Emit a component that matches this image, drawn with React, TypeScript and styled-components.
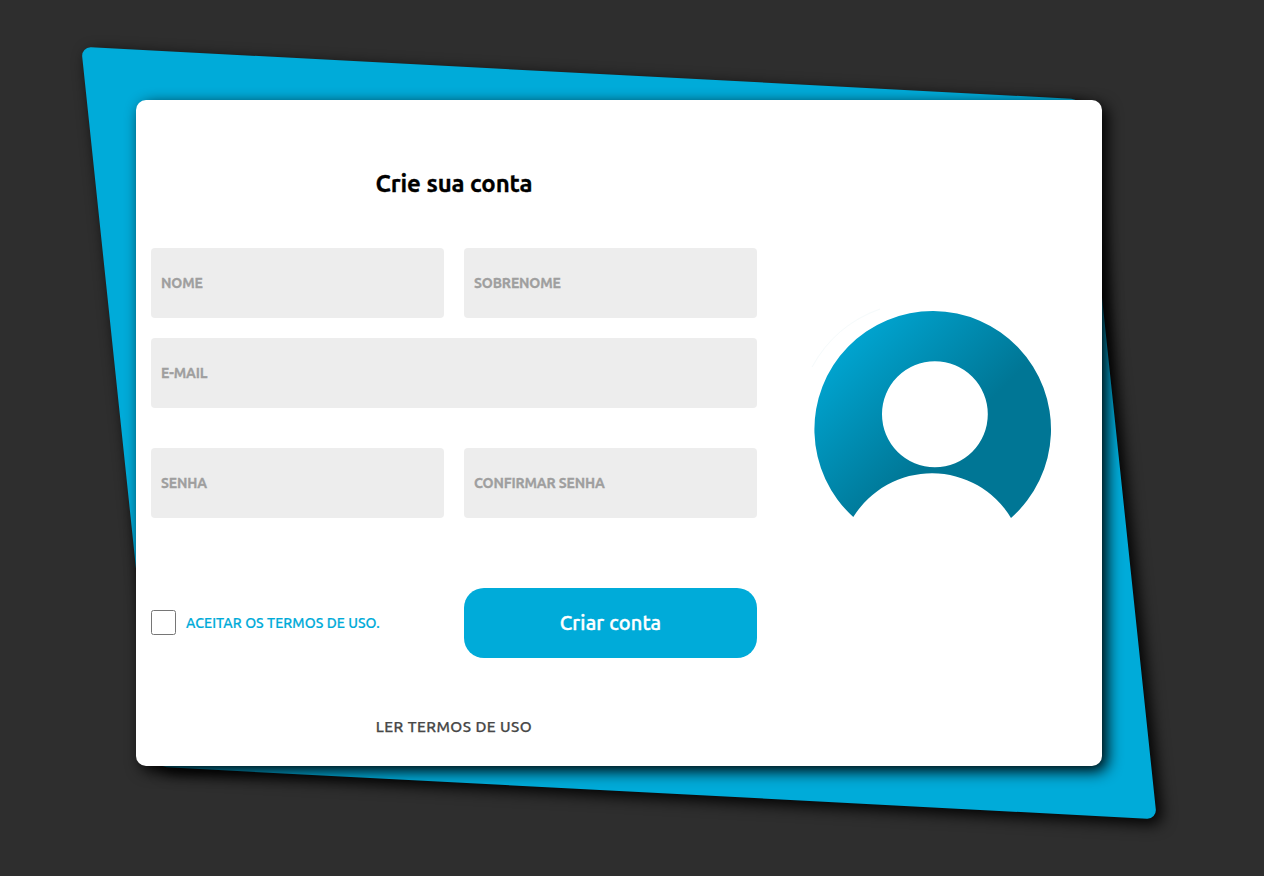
import React from "react";
import styled, { createGlobalStyle } from "styled-components";

const GlobalStyle = createGlobalStyle`
  * { box-sizing: border-box; }
  body {
    margin: 0;
    background: #2e2e2e;
    font-family: Ubuntu, "Noto Sans", sans-serif;
    overflow: hidden;
  }
`;

const Page = styled.main`
  height: 876px;
  padding: 100px 162px 110px 136px;
`;

const Stage = styled.div`
  position: relative;
  width: 966px;
  height: 666px;
`;

const Backdrop = styled.div`
  position: absolute;
  inset: -27px -17px;
  border-radius: 10px;
  background: #00abd9;
  box-shadow: 5px 5px 15px #000;
  transform: skew(6deg, 3deg);
`;

const Card = styled.section`
  position: relative;
  display: flex;
  height: 100%;
  padding: 0 15px;
  border-radius: 10px;
  background: #fff;
  box-shadow: 5px 5px 15px #000;
`;

const Form = styled.form`
  display: flex;
  flex-direction: column;
  width: 606px;
`;

const Title = styled.h1`
  margin: 66px 0 46px;
  height: 36px;
  line-height: 36px;
  font-size: 24px;
  font-weight: 700;
  letter-spacing: -0.1px;
  -webkit-text-stroke: 0.3px;
  text-align: center;
  color: #000;
`;

const Row = styled.div<{ $gap?: number }>`
  display: flex;
  align-items: center;
  gap: 20px;
  height: 70px;
  margin-bottom: ${(p) => p.$gap ?? 0}px;
`;

const Field = styled.input`
  flex: 1;
  min-width: 0;
  height: 70px;
  padding: 0 10px;
  border: 0;
  border-radius: 4px;
  background: #ededed;
  font: 700 14px Ubuntu, "Noto Sans", sans-serif;
  letter-spacing: -0.14px;
  &::placeholder {
    color: #9f9f9f;
    opacity: 1;
    -webkit-text-stroke: 0.3px;
  }
`;

const Terms = styled.label`
  flex: 1;
  display: flex;
  align-items: center;
  gap: 10px;
  height: 25px;
  margin-bottom: 1px;
  font-size: 14px;
  font-weight: 500;
  letter-spacing: 0.06px;
  -webkit-text-stroke: 0.2px;
  color: #00abd9;
  white-space: nowrap;
`;

const Check = styled.input`
  appearance: none;
  width: 25px;
  height: 25px;
  margin: 0;
  border: 1px solid #767676;
  border-radius: 2.5px;
  background: #fff;
`;

const Submit = styled.button`
  flex: 1;
  height: 70px;
  padding: 0 0 1px;
  border: 0;
  border-radius: 20px;
  background: #00abd9;
  color: #fff;
  font: 500 20px Ubuntu, "Noto Sans", sans-serif;
  letter-spacing: 0.16px;
  -webkit-text-stroke: 0.4px;
`;

const ReadTerms = styled.a`
  align-self: center;
  margin-top: 57px;
  line-height: 24px;
  font-size: 15.3px;
  font-weight: 500;
  letter-spacing: 0.43px;
  -webkit-text-stroke: 0.25px;
  color: #484848;
  white-space: nowrap;
`;

const Picture = styled.div`
  flex: 1;
  padding: 200px 0 0 43px;
`;

const Avatar = () => (
  <svg width="260" height="230" viewBox="800 300 260 230" aria-hidden="true" display="block">
    <defs>
      <linearGradient id="shade" gradientUnits="userSpaceOnUse" x1="843" y1="344" x2="945" y2="446">
        <stop offset="0" stopColor="#00a5d1" />
        <stop offset="1" stopColor="#007695" />
      </linearGradient>
    </defs>
    <path d="M812 367Q835 325 880 309" fill="none" stroke="#f5fafb" />
    <path
      fill="url(#shade)"
      fillRule="evenodd"
      d="M853.3 517A118.3 118.3 0 1 1 1011 518A92.4 92.4 0 0 0 853.3 517ZM882 414.2a52.9 52.9 0 1 0 105.8 0a52.9 52.9 0 1 0-105.8 0Z"
    />
  </svg>
);

export default function App() {
  return (
    <>
      <GlobalStyle />
      <Page>
        <Stage>
          <Backdrop />
          <Card>
            <Form>
              <Title>Crie sua conta</Title>
              <Row $gap={20}>
                <Field placeholder="NOME" />
                <Field placeholder="SOBRENOME" />
              </Row>
              <Row $gap={40}>
                <Field placeholder="E-MAIL" />
              </Row>
              <Row $gap={70}>
                <Field type="password" placeholder="SENHA" />
                <Field type="password" placeholder="CONFIRMAR SENHA" />
              </Row>
              <Row>
                <Terms>
                  <Check type="checkbox" />
                  <span>ACEITAR OS TERMOS DE USO.</span>
                </Terms>
                <Submit type="button">Criar conta</Submit>
              </Row>
              <ReadTerms>LER TERMOS DE USO</ReadTerms>
            </Form>
            <Picture>
              <Avatar />
            </Picture>
          </Card>
        </Stage>
      </Page>
    </>
  );
}
